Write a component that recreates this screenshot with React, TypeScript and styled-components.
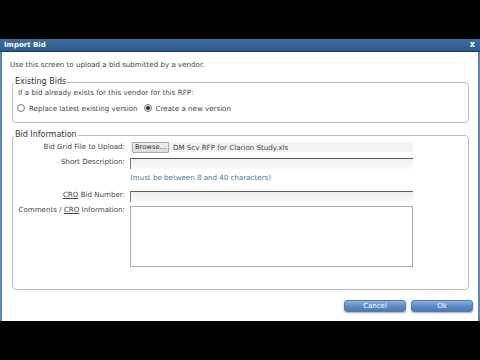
import React from 'react'
import styled, { createGlobalStyle } from 'styled-components'

const GlobalStyle = createGlobalStyle`
  html, body {
    margin: 0;
    padding: 0;
    background: #000;
  }
  body {
    font-family: "DejaVu Sans", Verdana, sans-serif;
  }
`

const Screen = styled.div`
  width: 480px;
  height: 360px;
  padding-top: 39px;
  box-sizing: border-box;
  background: #000;
  overflow: hidden;
`

const Dialog = styled.div`
  height: 282px;
  background: #fff;
  border-left: 2px solid #5f84b6;
  border-right: 2px solid #5f84b6;
  display: flex;
  flex-direction: column;
`

const TitleBar = styled.div`
  height: 12px;
  margin: 0 -2px;
  padding: 0 5px 0 4px;
  display: flex;
  align-items: center;
  justify-content: space-between;
  background: linear-gradient(#3f6e9d, #2d5a8b);
  border-bottom: 1px solid #1b3d66;
  color: #fff;
  font-weight: bold;
  font-size: 7px;
`

const Close = styled.span`
  font-size: 8px;
  line-height: 8px;
`

const Body = styled.div`
  padding: 8px 5px 0 8px;
  display: flex;
  flex-direction: column;
  font-size: 7.1px;
  color: #444;
`

const Line = styled.div`
  height: 10px;
  line-height: 10px;
  white-space: nowrap;
`

const Group = styled.fieldset<{ $top: number; $bottom: number }>`
  margin: ${p => p.$top}px 4px 0 2px;
  padding: 1px 5px ${p => p.$bottom}px 5px;
  border: 1px solid #bdbdbd;
  border-radius: 4px;
  min-width: 0;
`

const Legend = styled.legend`
  margin-left: -4px;
  padding: 0 1px;
  font-size: 8px;
  line-height: 10px;
  color: #333;
`

const RadioRow = styled.div`
  margin-top: 5px;
  height: 10px;
  display: flex;
  align-items: center;
  margin-left: -1px;
`

const RadioLabel = styled.label`
  display: flex;
  align-items: center;
  gap: 4px;
  margin-right: 6px;
  white-space: nowrap;
`

const Radio = styled.input`
  appearance: none;
  margin: 0;
  width: 8px;
  height: 8px;
  border-radius: 50%;
  border: 1px solid #7a7a7a;
  box-sizing: border-box;
  background: radial-gradient(circle, #fff 40%, #e4e4e4 100%);
  &:checked {
    background: radial-gradient(circle, #222 0 35%, #cfcfcf 45%, #f4f4f4 100%);
  }
`

const Form = styled.div`
  display: grid;
  grid-template-columns: 107px 283px;
  column-gap: 5px;
  align-items: start;
`

const Label = styled.div<{ $mt: number }>`
  margin-top: ${p => p.$mt}px;
  text-align: right;
  line-height: 10px;
  white-space: nowrap;
  u {
    text-decoration: underline;
  }
`

const FileBox = styled.div<{ $mt: number }>`
  margin-top: ${p => p.$mt}px;
  height: 10px;
  display: flex;
  align-items: center;
  gap: 4px;
  background: #f2f2f2;
  white-space: nowrap;
`

const Browse = styled.button`
  margin-left: 2px;
  height: 11px;
  width: 37px;
  padding: 0;
  font-family: inherit;
  font-size: 6.8px;
  color: #333;
  background: linear-gradient(#f0f0f0, #dcdcdc);
  border: 1px solid #a9a9a9;
  border-radius: 1px;
`

const TextBox = styled.div<{ $mt: number; $h: number; $area?: boolean }>`
  margin-top: ${p => p.$mt}px;
  height: ${p => p.$h}px;
  box-sizing: border-box;
  ${p =>
    p.$area
      ? `border: 1px solid #ababab; background: #fff;`
      : `border-style: solid; border-width: 1px 0 0 1px; border-color: #5c5c5c #e6e6e6 #e6e6e6 #777;
         background: linear-gradient(#efefef, #fafafa);`}
`

const Hint = styled.div<{ $mt: number }>`
  margin-top: ${p => p.$mt}px;
  line-height: 10px;
  color: #4a7597;
  white-space: nowrap;
`

const Footer = styled.div`
  margin-top: 10px;
  display: flex;
  justify-content: flex-end;
  gap: 5px;
`

const Btn = styled.button`
  width: 62px;
  height: 12px;
  padding: 0;
  border: 1px solid #4f79b0;
  border-radius: 3px;
  background: linear-gradient(#8db1df, #5c88c4 55%, #4d79b6);
  box-shadow: 0 1px 2px rgba(0, 0, 0, 0.35);
  color: #fff;
  font-family: inherit;
  font-size: 7px;
  line-height: 10px;
`

const App = () => {
  return (
    <>
      <GlobalStyle />
      <Screen>
        <Dialog>
          <TitleBar>
            <span>Import Bid</span>
            <Close>x</Close>
          </TitleBar>
          <Body>
            <Line>Use this screen to upload a bid submitted by a vendor.</Line>

            <Group $top={7} $bottom={9}>
              <Legend>Existing Bids</Legend>
              <Line>If a bid already exists for this vendor for this RFP:</Line>
              <RadioRow>
                <RadioLabel>
                  <Radio type="radio" name="ver" />
                  Replace latest existing version
                </RadioLabel>
                <RadioLabel>
                  <Radio type="radio" name="ver" defaultChecked />
                  Create a new version
                </RadioLabel>
              </RadioRow>
            </Group>

            <Group $top={7} $bottom={22}>
              <Legend>Bid Information</Legend>
              <Form>
                <Label $mt={1}>Bid Grid File to Upload:</Label>
                <FileBox $mt={1}>
                  <Browse>Browse...</Browse>
                  <span>DM Scv RFP for Clarion Study.xls</span>
                </FileBox>

                <Label $mt={5}>Short Description:</Label>
                <TextBox $mt={6} $h={11} />

                <div />
                <Hint $mt={4}>(must be between 8 and 40 characters)</Hint>

                <Label $mt={7}>
                  <u>CRO</u> Bid Number:
                </Label>
                <TextBox $mt={8} $h={11} />

                <Label $mt={3}>
                  Comments / <u>CRO</u> Information:
                </Label>
                <TextBox $mt={4} $h={61} $area />
              </Form>
            </Group>

            <Footer>
              <Btn>Cancel</Btn>
              <Btn>Ok</Btn>
            </Footer>
          </Body>
        </Dialog>
      </Screen>
    </>
  )
}

export default App
